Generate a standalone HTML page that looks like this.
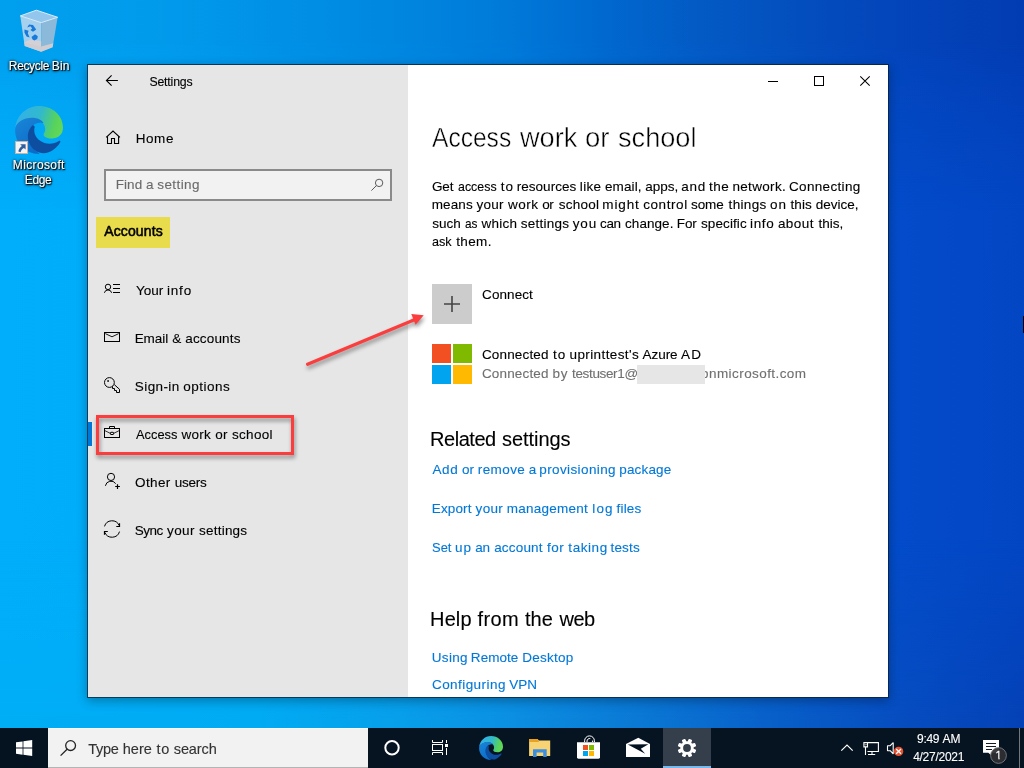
<!DOCTYPE html>
<html lang="en">
<head>
<meta charset="utf-8">
<title>Settings - Access work or school</title>
<style>
*{box-sizing:border-box;margin:0;padding:0}
html,body{width:1024px;height:768px;overflow:hidden}
body{position:relative;font-family:"Liberation Sans",Arial,sans-serif;font-size:14px;color:#000;background:#0a5fd0}
.abs,.t{position:absolute}
.t{left:0;white-space:nowrap;line-height:1;z-index:5;font-weight:normal;will-change:transform;-webkit-text-stroke:0.12px currentColor}
.t span{position:absolute;top:0;transform-origin:0 0}
#t-badge span{clip-path:polygon(0 0,64% 0,64% 100%,43% 100%,43% 70%,0 70%)}
#desktop{position:absolute;left:0;top:0;width:1024px;height:728px;overflow:hidden;
 background:linear-gradient(90deg,#00aefb 0px,#00adfa 88px,#029cee 300px,#0482de 500px,#056ad2 650px,#0456cc 800px,#034bca 900px,#0346c4 1024px)}
#desktop:before,#desktop:after{content:"";position:absolute;left:0;top:0;width:1024px;height:728px}
#desktop:before{background:linear-gradient(90deg,#00a0ee 0px,#019bec 150px,#008fe5 300px,#0084de 420px,#0079d9 512px,#0069cf 600px,#035ac5 700px,#034ebe 800px,#0344ba 900px,#023cb2 1024px);
 -webkit-mask-image:linear-gradient(180deg,#000 0,#000 40px,rgba(0,0,0,.5) 110px,transparent 210px);mask-image:linear-gradient(180deg,#000 0,#000 40px,rgba(0,0,0,.5) 110px,transparent 210px)}
#desktop:after{background:linear-gradient(90deg,#00aef6 0px,#00abf3 256px,#079fea 400px,#0b8fe2 512px,#0a78d4 640px,#0860c9 768px,#064dc0 900px,#0441b6 1024px);
 -webkit-mask-image:linear-gradient(180deg,transparent 540px,rgba(0,0,0,.6) 660px,#000 720px);mask-image:linear-gradient(180deg,transparent 540px,rgba(0,0,0,.6) 660px,#000 720px)}
#win{position:absolute;left:87px;top:64px;width:802px;height:634px;border:1px solid rgba(10,30,45,.78);box-shadow:0 3px 10px rgba(0,0,0,.3)}
#side{position:absolute;left:0;top:0;width:320px;height:632px;background:#e6e6e6}
#main{position:absolute;left:320px;top:0;width:480px;height:632px;background:#fff;overflow:hidden}
#taskbar{position:absolute;left:0;top:728px;width:1024px;height:40px;background:#061320}
svg{position:absolute;overflow:visible}
</style>
</head>
<body>
<div id="desktop"></div>
<div class="abs" style="left:1023px;top:316px;width:1px;height:17px;background:#000"></div>
<!-- Recycle Bin icon -->
<svg id="ic-rb" width="48" height="48" viewBox="15 6 48 48" style="left:15px;top:6px">
 <path d="M20.3 16L24.7 46L41.2 51.7L41.2 22.6Z" fill="#a6d1ee"/>
 <path d="M41.2 22.6L41.2 51.7L52.6 47.2L57.6 17.4Z" fill="#8bb9da"/>
 <path d="M20.3 15.9L36.4 10.2L57.7 17.3L41.2 22.6Z" fill="#93c6ec" stroke="#dcecf8" stroke-width="1"/>
 <path d="M24.1 42L24.8 46L41.2 51.7L52.6 47.2L53.3 43.2L41.2 46.5Z" fill="#cfcdd2"/>
 <path d="M26 41.5L31 39.5L41.2 41.2L41.2 46.8L24.4 42.6Z" fill="#d3d1d6"/>
 <g fill="#1779d9">
  <path d="M27.2 27.5L30.5 26.2L32.2 28.6L30.4 30L33 31.8L36.2 29.6L33 25L29 24.6Z"/>
  <path d="M24.5 29.5L28.6 30.8L27.8 33.2L29.6 37.6L26.6 36.4L24.4 32.4Z"/>
  <path d="M31.5 37L35 34.2L37.8 36.2L37.2 39L34.4 40.6L32.6 39.4Z"/>
 </g>
</svg>
<!-- Edge desktop icon -->
<svg id="ic-edge" width="48" height="48" viewBox="0 0 48 48" style="left:15px;top:106px">
 <defs><linearGradient id="eg1a" x1="0" y1="0.3" x2="1" y2="0.5">
   <stop offset="0" stop-color="#34b0ea"/><stop offset="0.5" stop-color="#31b9cc"/><stop offset="0.85" stop-color="#58d35a"/><stop offset="1" stop-color="#62d85a"/>
  </linearGradient>
  <linearGradient id="eg2a" x1="0" y1="0" x2="0.6" y2="1">
   <stop offset="0" stop-color="#1a86d8"/><stop offset="1" stop-color="#0b6cc8"/>
  </linearGradient></defs>
 <path d="M0.3 22C1.5 9.5 11.5 0 24 0C37.5 0 48 9.5 48 21.5C48 29 42.5 32.5 37 32.5C31.5 32.5 28.5 30.5 28.5 28.5C28.5 27 30.2 26.3 30.2 23.2C30.2 18.5 26 12.5 17.5 12.5C9 12.5 1.5 18 0.3 22Z" fill="url(#eg1a)"/>
   <path d="M0.3 22C1.5 16.5 8.5 11.8 17 11.8C22.5 11.8 26.5 14 28.5 17C24 15.2 18.5 17.5 16 21.8C12.2 28.5 14 40.5 24.5 47.8C24.3 48 24.2 48 24 48C10.5 48 -1.2 36.5 0.3 22Z" fill="url(#eg2a)"/>
   <path d="M17.6 19.2C13 23.5 11.3 30.5 14.5 37.5C18 45.2 26 49 33.5 46.3C39 44.3 43 40 45.2 36.2C45.8 35.2 44.8 34.4 43.8 35C38 38.8 29.5 38.6 24 34C19.6 30.3 18.4 25 19.8 20.8C19.2 19.8 18.4 19.2 17.6 19.2Z" fill="#0d4ea0"/>
</svg>
<div class="abs" id="shortcut" style="left:15px;top:141px;width:13px;height:13px;background:#f4f4f4;border:1px solid #c9b3a4"></div>
<svg width="13" height="13" viewBox="0 0 13 13" style="left:15px;top:141px">
 <path d="M5.2 3.2H10.6V8.6L8.9 6.9C7 8 6 9.3 5.6 11.2L3.4 10.6C3.6 8.2 4.8 6.4 6.9 5Z" fill="#2f5f9f"/>
</svg>
<div id="win">
 <div id="side">
  <div class="abs" id="search" style="left:16px;top:104px;width:288px;height:32px;border:2px solid #8a8a8a;background:#f2f2f2"></div>
  <div class="abs" id="hl" style="left:8px;top:152px;width:74px;height:31px;background:#e8dc4c"></div>
  <div class="abs" id="sel" style="left:0;top:357px;width:4px;height:24px;background:#0078d7"></div>
 </div>
 <div id="main">
  <div class="abs" id="plus" style="left:24px;top:219px;width:40px;height:40px;background:#ccc"></div>
  <div class="abs" style="left:24px;top:279px;width:19.3px;height:19.3px;background:#f25022"></div>
  <div class="abs" style="left:44.7px;top:279px;width:19.3px;height:19.3px;background:#7fba00"></div>
  <div class="abs" style="left:24px;top:299.7px;width:19.3px;height:19.3px;background:#00a4ef"></div>
  <div class="abs" style="left:44.7px;top:299.7px;width:19.3px;height:19.3px;background:#ffb900"></div>
  <div class="abs" id="redact" style="left:229px;top:300px;width:68px;height:19px;background:#e6e6e6;z-index:6"></div>
 </div>
</div>
<!-- window icons (page coordinates) -->
<svg id="wicons" width="1024" height="768" viewBox="0 0 1024 768" style="left:0;top:0;z-index:4" fill="none" stroke="#000" stroke-width="1">
 <!-- back -->
 <path d="M117.9 80.5H106.6M111.6 75.3L106.4 80.5L111.6 85.7" stroke-width="1.1"/>
 <!-- window controls -->
 <path d="M768 81.5H778" />
 <rect x="814.5" y="76.5" width="9" height="9"/>
 <path d="M860.3 76.3L869.7 85.7M869.7 76.3L860.3 85.7" stroke-width="1.05"/>
 <!-- home -->
 <path d="M106.2 137.4L113 131L119.9 137.4" stroke-width="1.1"/>
 <path d="M107.5 136.3V143.5H111.5V138.5H114.5V143.5H118.6V136.3" stroke-width="1.1"/>
 <!-- search -->
 <g stroke="#5a5a5a"><circle cx="379.1" cy="182.9" r="3.7"/><path d="M376.4 185.6L371.4 190.6"/></g>
 <!-- your info -->
 <circle cx="108" cy="286.9" r="2.7"/>
 <path d="M104.4 292.8A3.7 3.7 0 0 1 111.6 292.8"/>
 <path d="M113 284.5H120M113 288.5H120M113 292.5H120"/>
 <!-- mail -->
 <rect x="104.5" y="332.5" width="15" height="9"/>
 <path d="M105.3 333.6L112 336.8L118.7 333.6" stroke-width="0.9"/>
 <!-- key -->
 <circle cx="109.4" cy="382.5" r="4.9"/>
 <rect x="107.3" y="380.2" width="1.6" height="1.6" fill="#000" stroke="none"/>
 <path d="M114.3 384.6L119.5 389.3V392.5H116.5V390.5H114.5V388.5H112.5V386.4"/>
 <!-- briefcase -->
 <rect x="104.5" y="428.5" width="15" height="9"/>
 <path d="M109.5 428.5V426.5H114.5V428.5"/>
 <path d="M104.8 430.6L110 433.2M114 433.2L119.2 430.6" stroke-width="0.8"/>
 <rect x="110.4" y="432.3" width="3.2" height="2.2" rx="0.6"/>
 <!-- other users -->
 <circle cx="111" cy="476.9" r="3.6"/>
 <path d="M105.4 485.8A5.7 5.7 0 0 1 115.7 483.6"/>
 <path d="M115.2 486.5H119.9M117.5 484.2V488.9" stroke-width="1.2"/>
 <!-- sync -->
 <path d="M104.5 526.4A7.8 7.8 0 0 1 119.2 525.6"/>
 <path d="M116.3 526.5H119.5V523.3" stroke-width="1.2"/>
 <path d="M119.5 531.6A7.8 7.8 0 0 1 104.8 532.4"/>
 <path d="M107.8 531.5H104.5V534.7" stroke-width="1.2"/>
 <!-- plus -->
 <path d="M444 304H460M452 296V312" stroke="#444" stroke-width="1.6"/>
</svg>
<!-- annotations -->
<div class="abs" id="redbox" style="left:96px;top:415px;width:198px;height:40px;border:3px solid #fb3d3d;z-index:7;filter:drop-shadow(1.5px 3px 2.2px rgba(0,0,0,.42))"></div>
<svg id="arrow" width="1024" height="768" viewBox="0 0 1024 768" style="left:0;top:0;z-index:7;filter:drop-shadow(1.5px 3px 2px rgba(0,0,0,.42))">
 <path d="M307.6 364.2L415 319.6" stroke="#fb3d3d" stroke-width="3.3" stroke-linecap="round" fill="none"/>
 <path d="M423.7 315.3L411.3 314.0L415.6 324.8Z" fill="#fb3d3d"/>
</svg>
<div id="taskbar">
 <div class="abs" id="tstart" style="left:0;top:0;width:48px;height:40px;background:#051321"></div>
 <div class="abs" id="tsearch" style="left:48px;top:0;width:320px;height:40px;background:#f2f2f2;border-top:1px solid #fbfbfb;border-bottom:1px solid #b4b4b4"></div>
 <div class="abs" id="tb-active" style="left:663px;top:0;width:48px;height:40px;background:#353f4b"></div>
 <div class="abs" id="tb-line" style="left:663px;top:38px;width:48px;height:2px;background:#79b8ea"></div>
 <div class="abs" id="tb-sep" style="left:1019px;top:0;width:1px;height:40px;background:#73777c"></div>
</div>
<svg id="ticons" width="1024" height="768" viewBox="0 0 1024 768" style="left:0;top:0;z-index:4" fill="none">
 <!-- windows logo -->
 <path d="M16 742.3L22.6 741.4V747.6H16ZM23.4 741.3L32.2 740V747.6H23.4ZM16 748.4H22.6V754.7L16 753.8ZM23.4 748.4H32.2V756.1L23.4 754.8Z" fill="#fff"/>
 <!-- search -->
 <g stroke="#222" stroke-width="1.3"><circle cx="70.6" cy="745.6" r="4.9"/><path d="M67.1 749.2L60.6 755.6"/></g>
 <!-- cortana -->
 <circle cx="392" cy="747.8" r="6.7" stroke="#fff" stroke-width="2"/>
 <!-- task view -->
 <g stroke="#fff" stroke-width="1">
  <rect x="432.5" y="744.5" width="10" height="6"/>
  <path d="M432.5 740V742.5H442.5V740M432.5 755V752.5H442.5V755"/>
  <path d="M446.5 740V743M446.5 748V755"/>
  <rect x="445" y="744" width="3" height="3" fill="#fff" stroke="none"/>
 </g>
 <!-- explorer -->
 <path d="M529.1 739H537.4L538.9 740.5H550.2V755.9H529.1Z" fill="#f7d373"/>
 <path d="M529.1 739H537.4L538.9 740.5V741.9H529.1Z" fill="#e9a220"/>
 <path d="M533 749.3H546.7V757H543.2V752.4H536.6V757H533Z" fill="#3b8fe3"/>
 <!-- store -->
 <path d="M577 742.2H600V757.3Q600 758.7 598.6 758.7H578.4Q577 758.7 577 757.3Z" fill="#fff"/>
 <path d="M584.6 742V740.8A4.9 4.9 0 0 1 594.4 740.8V742M587 742V741A2.6 2.6 0 0 1 590.3 738.6M592.6 742V740.6" stroke="#fff" stroke-width="1"/>
 <rect x="583" y="745" width="5" height="5" fill="#f25022"/><rect x="589" y="745" width="5" height="5" fill="#7fba00"/>
 <rect x="583" y="751" width="5" height="5" fill="#00a4ef"/><rect x="589" y="751" width="5" height="5" fill="#ffb900"/>
 <!-- mail -->
 <path d="M626 744L638.3 737.8L650 744V757H626Z" fill="#fff"/>
 <path d="M627.8 744.4L648.4 744.2L640.8 748.8L645.2 753.8Z" fill="#051321"/>
 <!-- tray chevron -->
 <path d="M841.3 750.6L847 745L852.7 750.6" stroke="#fff" stroke-width="1.2"/>
 <!-- network -->
 <g stroke="#fff" stroke-width="1.1"><path d="M867.5 742.6H878.4V751.5H867.5"/><path d="M863.9 742.6H867.5V746.9H863.9Z"/><path d="M865.5 746.9V755M868 754.5H875.2M872 751.5V754.5"/><path d="M864.9 744.2L865.7 745.2L866.5 744.2" stroke-width="0.8"/></g>
 <!-- volume -->
 <path d="M887.5 745.7H890.2L893.2 742.6V753.9L890.2 750.7H887.5Z" stroke="#fff" stroke-width="1.1" stroke-linejoin="bevel"/>
 <circle cx="898.6" cy="751.4" r="4.7" fill="#e8512f"/>
 <path d="M896.2 749L901 753.8M901 749L896.2 753.8" stroke="#fff" stroke-width="1.25"/>
 <!-- notification -->
 <path d="M983 740H999V752.8H991.2V755.2L988.3 752.8H983Z" fill="#fff"/>
 <path d="M986 743.5H996M986 746.5H996M986 749.5H992" stroke="#141b25" stroke-width="1"/>
 <circle cx="998.5" cy="755.5" r="7.9" fill="#2f2f31" fill-opacity=".93" stroke="#85878a" stroke-opacity=".8" stroke-width="1"/>
</svg>
<svg id="tb-edge" width="24" height="24" viewBox="0 0 48 48" style="left:479px;top:736px;z-index:4">
 <defs><linearGradient id="eg1b" x1="0" y1="0.3" x2="1" y2="0.5">
   <stop offset="0" stop-color="#34b0ea"/><stop offset="0.5" stop-color="#31b9cc"/><stop offset="0.85" stop-color="#58d35a"/><stop offset="1" stop-color="#62d85a"/>
  </linearGradient>
  <linearGradient id="eg2b" x1="0" y1="0" x2="0.6" y2="1">
   <stop offset="0" stop-color="#1a86d8"/><stop offset="1" stop-color="#0b6cc8"/>
  </linearGradient></defs>
 <path d="M0.3 22C1.5 9.5 11.5 0 24 0C37.5 0 48 9.5 48 21.5C48 29 42.5 32.5 37 32.5C31.5 32.5 28.5 30.5 28.5 28.5C28.5 27 30.2 26.3 30.2 23.2C30.2 18.5 26 12.5 17.5 12.5C9 12.5 1.5 18 0.3 22Z" fill="url(#eg1b)"/>
   <path d="M0.3 22C1.5 16.5 8.5 11.8 17 11.8C22.5 11.8 26.5 14 28.5 17C24 15.2 18.5 17.5 16 21.8C12.2 28.5 14 40.5 24.5 47.8C24.3 48 24.2 48 24 48C10.5 48 -1.2 36.5 0.3 22Z" fill="url(#eg2b)"/>
   <path d="M17.6 19.2C13 23.5 11.3 30.5 14.5 37.5C18 45.2 26 49 33.5 46.3C39 44.3 43 40 45.2 36.2C45.8 35.2 44.8 34.4 43.8 35C38 38.8 29.5 38.6 24 34C19.6 30.3 18.4 25 19.8 20.8C19.2 19.8 18.4 19.2 17.6 19.2Z" fill="#0d4ea0"/>
</svg>
<svg id="tb-gear" width="24" height="24" viewBox="-12 -12 24 24" style="left:674.8px;top:735.8px;z-index:4">
 <g fill="#fff">
  <rect x="-1.9" y="-9.3" width="3.8" height="18.6" rx="0.9" transform="rotate(22.5)"/>
  <rect x="-1.9" y="-9.3" width="3.8" height="18.6" rx="0.9" transform="rotate(67.5)"/>
  <rect x="-1.9" y="-9.3" width="3.8" height="18.6" rx="0.9" transform="rotate(112.5)"/>
  <rect x="-1.9" y="-9.3" width="3.8" height="18.6" rx="0.9" transform="rotate(157.5)"/>
  <circle r="6.7"/>
 </g>
 <circle r="3.9" fill="#353f4b"/>
</svg>

<!-- text layer -->
<div class="t" id="l-rb" style="top:60.01px;font-size:12px;color:#fff;text-shadow:1px 1px 1px #000,0 0 3px rgba(0,0,0,.9),0 1px 3px rgba(0,0,0,.8)"><span id="l-rb-0" style="left:8.82px;letter-spacing:-0.344px">Recycle</span> <span id="l-rb-1" style="left:51.82px;letter-spacing:0.091px">Bin</span></div>
<div class="t" id="l-ms" style="top:159.01px;font-size:12px;color:#fff;text-shadow:1px 1px 1px #000,0 0 3px rgba(0,0,0,.9),0 1px 3px rgba(0,0,0,.8)"><span id="l-ms-0" style="left:12.79px;letter-spacing:0.372px">Microsoft</span></div>
<div class="t" id="l-ed" style="top:174.01px;font-size:12px;color:#fff;text-shadow:1px 1px 1px #000,0 0 3px rgba(0,0,0,.9),0 1px 3px rgba(0,0,0,.8)"><span id="l-ed-0" style="left:24.82px;letter-spacing:-0.388px">Edge</span></div>
<div class="t" id="t-settings" style="top:76.01px;font-size:12.3px;"><span id="t-settings-0" style="left:149.38px;letter-spacing:-0.160px">Settings</span></div>
<div class="t" id="t-home" style="top:132.01px;font-size:13.5px;"><span id="t-home-0" style="left:135.78px;letter-spacing:0.541px">Home</span></div>
<div class="t" id="t-find" style="top:178.01px;font-size:13.5px;color:#6a6a6a"><span id="t-find-0" style="left:115.65px;letter-spacing:0.102px">Find</span> <span id="t-find-1" style="left:146.09px">a</span> <span id="t-find-2" style="left:157.35px;letter-spacing:0.385px">setting</span></div>
<div class="t" id="t-accounts" style="top:224.01px;font-size:14px;-webkit-text-stroke:0.55px #000"><span id="t-accounts-0" style="left:104.19px;letter-spacing:0.134px">Accounts</span></div>
<div class="t" id="t-n1" style="top:284.01px;font-size:13.5px;"><span id="t-n1-0" style="left:135.93px;letter-spacing:0.026px">Your</span> <span id="t-n1-1" style="left:167.04px;letter-spacing:0.781px">info</span></div>
<div class="t" id="t-n2" style="top:332.01px;font-size:13.5px;"><span id="t-n2-0" style="left:134.65px;letter-spacing:-0.054px">Email</span> <span id="t-n2-1" style="left:172.15px">&amp;</span> <span id="t-n2-2" style="left:185.24px;letter-spacing:0.168px">accounts</span></div>
<div class="t" id="t-n3" style="top:380.01px;font-size:13.5px;"><span id="t-n3-0" style="left:134.84px;letter-spacing:0.406px">Sign-in</span> <span id="t-n3-1" style="left:183.19px;letter-spacing:0.491px">options</span></div>
<div class="t" id="t-n4" style="top:428.01px;font-size:13.5px;"><span id="t-n4-0" style="left:136.45px;transform:scaleX(0.9505)">Access</span> <span id="t-n4-1" style="left:181.62px;letter-spacing:0.238px">work</span> <span id="t-n4-2" style="left:215.19px;letter-spacing:0.292px">or</span> <span id="t-n4-3" style="left:232.00px;letter-spacing:0.306px">school</span></div>
<div class="t" id="t-n5" style="top:476.01px;font-size:13.5px;"><span id="t-n5-0" style="left:135.07px;letter-spacing:0.383px">Other</span> <span id="t-n5-1" style="left:174.82px;letter-spacing:-0.278px">users</span></div>
<div class="t" id="t-n6" style="top:524.01px;font-size:13.5px;"><span id="t-n6-0" style="left:134.87px;letter-spacing:-0.507px">Sync</span> <span id="t-n6-1" style="left:167.00px;letter-spacing:0.382px">your</span> <span id="t-n6-2" style="left:199.00px;letter-spacing:0.224px">settings</span></div>
<h1 class="t" id="t-h1" style="top:123.00px;font-size:28.5px;-webkit-text-stroke:0.5px #fff"><span id="t-h1-0" style="left:432.36px;transform:scaleX(0.8621)">Access</span> <span id="t-h1-1" style="left:520.25px;transform:scaleX(0.9526)">work</span> <span id="t-h1-2" style="left:585.00px;transform:scaleX(0.9653)">or</span> <span id="t-h1-3" style="left:618.05px;transform:scaleX(0.9530)">school</span></h1>
<div class="t" id="t-p1" style="top:180.01px;font-size:13.5px;"><span id="t-p1-0" style="left:431.95px;letter-spacing:-0.070px">Get</span> <span id="t-p1-1" style="left:458.00px;transform:scaleX(0.9182)">access</span> <span id="t-p1-2" style="left:500.82px;letter-spacing:0.880px">to</span> <span id="t-p1-3" style="left:516.80px;letter-spacing:0.014px">resources</span> <span id="t-p1-4" style="left:579.82px;letter-spacing:0.339px">like</span> <span id="t-p1-5" style="left:604.92px;letter-spacing:0.116px">email,</span> <span id="t-p1-6" style="left:645.24px;letter-spacing:0.016px">apps,</span> <span id="t-p1-7" style="left:681.36px;letter-spacing:0.736px">and</span> <span id="t-p1-8" style="left:709.00px;letter-spacing:0.515px">the</span> <span id="t-p1-9" style="left:732.44px;letter-spacing:0.323px">network.</span> <span id="t-p1-10" style="left:789.02px;letter-spacing:0.324px">Connecting</span></div>
<div class="t" id="t-p2" style="top:198.01px;font-size:13.5px;"><span id="t-p2-0" style="left:431.75px;letter-spacing:0.089px">means</span> <span id="t-p2-1" style="left:476.40px;letter-spacing:0.304px">your</span> <span id="t-p2-2" style="left:508.00px;letter-spacing:0.489px">work</span> <span id="t-p2-3" style="left:542.15px;letter-spacing:-0.376px">or</span> <span id="t-p2-4" style="left:558.68px;letter-spacing:0.247px">school</span> <span id="t-p2-5" style="left:602.36px;letter-spacing:0.857px">might</span> <span id="t-p2-6" style="left:643.23px;letter-spacing:0.569px">control</span> <span id="t-p2-7" style="left:691.00px;letter-spacing:-0.116px">some</span> <span id="t-p2-8" style="left:728.62px;letter-spacing:0.320px">things</span> <span id="t-p2-9" style="left:769.97px;letter-spacing:0.974px">on</span> <span id="t-p2-10" style="left:790.62px;letter-spacing:0.010px">this</span> <span id="t-p2-11" style="left:815.73px;letter-spacing:0.006px">device,</span></div>
<div class="t" id="t-p3" style="top:217.01px;font-size:13.5px;"><span id="t-p3-0" style="left:432.17px;letter-spacing:0.007px">such</span> <span id="t-p3-1" style="left:464.84px;transform:scaleX(0.8744)">as</span> <span id="t-p3-2" style="left:481.42px;letter-spacing:0.250px">which</span> <span id="t-p3-3" style="left:520.78px;letter-spacing:0.248px">settings</span> <span id="t-p3-4" style="left:572.77px;letter-spacing:0.854px">you</span> <span id="t-p3-5" style="left:600.00px;letter-spacing:-0.328px">can</span> <span id="t-p3-6" style="left:625.00px;letter-spacing:0.062px">change.</span> <span id="t-p3-7" style="left:676.76px;letter-spacing:-0.104px">For</span> <span id="t-p3-8" style="left:701.00px;letter-spacing:0.101px">specific</span> <span id="t-p3-9" style="left:750.10px;letter-spacing:0.601px">info</span> <span id="t-p3-10" style="left:777.91px;letter-spacing:0.439px">about</span> <span id="t-p3-11" style="left:818.60px">this,</span></div>
<div class="t" id="t-p4" style="top:235.01px;font-size:13.5px;"><span id="t-p4-0" style="left:432.44px;transform:scaleX(0.9341)">ask</span> <span id="t-p4-1" style="left:456.24px;letter-spacing:0.358px">them.</span></div>
<div class="t" id="t-connect" style="top:288.01px;font-size:13.5px;"><span id="t-connect-0" style="left:482.10px;letter-spacing:0.067px">Connect</span></div>
<div class="t" id="t-c1" style="top:348.01px;font-size:13.5px;"><span id="t-c1-0" style="left:481.92px;letter-spacing:0.160px">Connected</span> <span id="t-c1-1" style="left:553.00px;letter-spacing:0.880px">to</span> <span id="t-c1-2" style="left:569.55px;letter-spacing:0.387px">uprinttest's</span> <span id="t-c1-3" style="left:642.60px;letter-spacing:-0.060px">Azure</span> <span id="t-c1-4" style="left:681.00px;letter-spacing:1.140px">AD</span></div>
<div class="t" id="t-c2" style="top:367.01px;font-size:13.5px;color:#707070"><span id="t-c2-0" style="left:481.92px;letter-spacing:0.160px">Connected</span> <span id="t-c2-1" style="left:552.38px;letter-spacing:0.861px">by</span> <span id="t-c2-2" style="left:572.00px;letter-spacing:-0.343px">testuser1@</span></div>
<div class="t" id="t-c3" style="top:367.01px;font-size:13.5px;color:#707070"><span id="t-c3-0" style="left:701.10px;letter-spacing:0.421px">onmicrosoft.com</span></div>
<h2 class="t" id="t-h2" style="top:429.01px;font-size:20px;"><span id="t-h2-0" style="left:429.98px;letter-spacing:-0.447px">Related</span> <span id="t-h2-1" style="left:502.10px;letter-spacing:-0.057px">settings</span></h2>
<div class="t" id="t-l1" style="top:463.01px;font-size:13.5px;color:#0078d7"><span id="t-l1-0" style="left:432.38px;letter-spacing:0.681px">Add</span> <span id="t-l1-1" style="left:462.00px">or</span> <span id="t-l1-2" style="left:477.80px;letter-spacing:0.406px">remove</span> <span id="t-l1-3" style="left:528.74px">a</span> <span id="t-l1-4" style="left:539.28px;letter-spacing:0.389px">provisioning</span> <span id="t-l1-5" style="left:619.28px;letter-spacing:0.159px">package</span></div>
<div class="t" id="t-l2" style="top:502.01px;font-size:13.5px;color:#0078d7"><span id="t-l2-0" style="left:431.78px;letter-spacing:0.138px">Export</span> <span id="t-l2-1" style="left:475.60px;letter-spacing:0.318px">your</span> <span id="t-l2-2" style="left:506.81px;letter-spacing:0.244px">management</span> <span id="t-l2-3" style="left:592.27px;letter-spacing:1.159px">log</span> <span id="t-l2-4" style="left:616.59px;letter-spacing:0.156px">files</span></div>
<div class="t" id="t-l3" style="top:541.01px;font-size:13.5px;color:#0078d7"><span id="t-l3-0" style="left:431.59px;transform:scaleX(0.9590)">Set</span> <span id="t-l3-1" style="left:455.06px;letter-spacing:0.974px">up</span> <span id="t-l3-2" style="left:475.17px;letter-spacing:-0.188px">an</span> <span id="t-l3-3" style="left:494.15px;letter-spacing:0.186px">account</span> <span id="t-l3-4" style="left:547.00px;letter-spacing:0.550px">for</span> <span id="t-l3-5" style="left:568.36px;letter-spacing:0.552px">taking</span> <span id="t-l3-6" style="left:610.50px;letter-spacing:0.154px">tests</span></div>
<h2 class="t" id="t-h3" style="top:609.01px;font-size:20px;"><span id="t-h3-0" style="left:430.12px;letter-spacing:0.093px">Help</span> <span id="t-h3-1" style="left:477.62px;letter-spacing:0.372px">from</span> <span id="t-h3-2" style="left:525.00px">the</span> <span id="t-h3-3" style="left:559.62px;letter-spacing:-0.557px">web</span></h2>
<div class="t" id="t-l4" style="top:651.01px;font-size:13.5px;color:#0078d7"><span id="t-l4-0" style="left:431.83px;letter-spacing:0.281px">Using</span> <span id="t-l4-1" style="left:470.86px;letter-spacing:0.017px">Remote</span> <span id="t-l4-2" style="left:522.20px;letter-spacing:0.267px">Desktop</span></div>
<div class="t" id="t-l5" style="top:678.01px;font-size:13.5px;color:#0078d7"><span id="t-l5-0" style="left:431.94px;letter-spacing:0.444px">Configuring</span> <span id="t-l5-1" style="left:509.25px">VPN</span></div>
<div class="t" id="t-type" style="top:742.01px;font-size:14.5px;color:#333"><span id="t-type-0" style="left:88.21px;letter-spacing:-0.307px">Type</span> <span id="t-type-1" style="left:122.78px;letter-spacing:0.042px">here</span> <span id="t-type-2" style="left:156.39px;letter-spacing:0.908px">to</span> <span id="t-type-3" style="left:173.75px;letter-spacing:-0.099px">search</span></div>
<div class="t" id="t-time" style="top:733.01px;font-size:12px;color:#fff"><span id="t-time-0" style="left:917.04px;letter-spacing:-0.315px">9:49</span> <span id="t-time-1" style="left:942.50px">AM</span></div>
<div class="t" id="t-date" style="top:751.01px;font-size:12px;color:#fff"><span id="t-date-0" style="left:913.16px;letter-spacing:-0.271px">4/27/2021</span></div>
<div class="t" id="t-badge" style="top:750.00px;font-size:11.5px;color:#fff;-webkit-text-stroke:0.3px #fff"><span id="t-badge-0" style="left:995.56px">1</span></div>
</body>
</html>
